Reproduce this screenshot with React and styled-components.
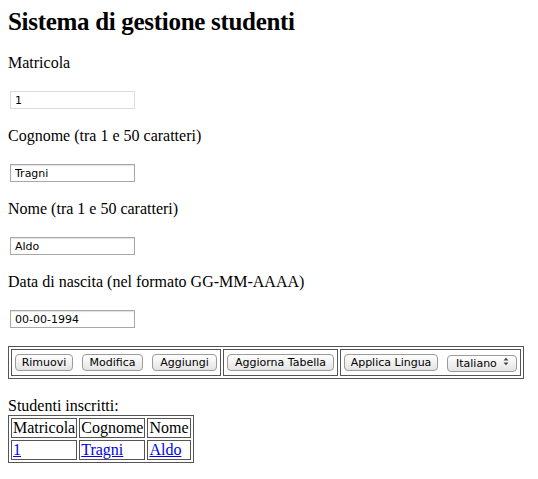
import React from "react";
import styled, { createGlobalStyle } from "styled-components";

const GlobalStyle = createGlobalStyle`
  body {
    margin: 0;
    padding: 7px 8px;
    background: #fff;
    color: #000;
    font-family: "Liberation Serif", "Times New Roman", serif;
    font-size: 16px;
  }
`;

const Title = styled.h1`
  margin: 0 0 18px;
  font-size: 25px;
  letter-spacing: -0.3px;
  line-height: 29px;
  font-weight: bold;
`;

const Group = styled.div`
  margin-bottom: 18px;
`;

const Label = styled.p`
  margin: 0;
  line-height: 18px;
`;

const Input = styled.input`
  display: block;
  box-sizing: border-box;
  width: 125px;
  height: 18px;
  margin: 19px 0 0 2px;
  padding: 0 4px;
  border: 1px solid ${(p) => (p.readOnly ? "#dcdcdc" : "#a8a8a8")};
  box-shadow: ${(p) => (p.readOnly ? "none" : "inset 0 1px 1px rgba(0,0,0,0.12)")};
  font-family: "DejaVu Sans", Verdana, sans-serif;
  font-size: 11px;
  color: #000;
  background: #fff;
  outline: none;
`;

const Toolbar = styled.table`
  margin-top: 1px;
  border: 1px solid #555;
  border-spacing: 2px;
`;

const ToolCell = styled.td`
  border: 1px solid #555;
  padding: 1px;
`;

const ButtonRow = styled.div`
  display: flex;
  gap: 5px;
  align-items: center;
`;

const Button = styled.button`
  box-sizing: border-box;
  width: ${(p) => p.w}px;
  height: 17px;
  margin: 2px;
  padding: 0;
  border: 1px solid #9b9b9b;
  border-radius: 4px;
  background: linear-gradient(#ffffff, #f1f1f1 50%, #e4e4e4);
  font-family: "DejaVu Sans", Verdana, sans-serif;
  font-size: 11px;
  line-height: 15px;
  color: #000;
  white-space: nowrap;
`;

const SelectWrap = styled.div`
  position: relative;
  margin: 2px;
`;

const Select = styled.select`
  box-sizing: border-box;
  width: 70px;
  height: 17px;
  padding: 0 0 0 8px;
  border: 1px solid #9b9b9b;
  border-radius: 4px;
  background: linear-gradient(#ffffff, #f1f1f1 50%, #e4e4e4);
  font-family: "DejaVu Sans", Verdana, sans-serif;
  font-size: 11px;
  color: #000;
  appearance: none;
  -webkit-appearance: none;
  outline: none;
`;

const Arrows = styled.svg`
  position: absolute;
  right: 8px;
  top: 4px;
  pointer-events: none;
`;

const Caption = styled.div`
  margin-top: 18px;
  line-height: 18px;
`;

const DataTable = styled.table`
  border: 1px solid #555;
  border-spacing: 2px;
`;

const Cell = styled.td`
  border: 1px solid #555;
  padding: 1px;
  line-height: 16px;
  white-space: nowrap;
`;

const Link = styled.a`
  color: #0000ee;
  text-decoration: underline;
`;

const fields = [
  { label: "Matricola", value: "1", readOnly: true },
  { label: "Cognome (tra 1 e 50 caratteri)", value: "Tragni" },
  { label: "Nome (tra 1 e 50 caratteri)", value: "Aldo" },
  { label: "Data di nascita (nel formato GG-MM-AAAA)", value: "00-00-1994" },
];

export default function App() {
  return (
    <>
      <GlobalStyle />
      <Title>Sistema di gestione studenti</Title>
      {fields.map((f) => (
        <Group key={f.label}>
          <Label>{f.label}</Label>
          <Input defaultValue={f.value} readOnly={f.readOnly} />
        </Group>
      ))}
      <Toolbar>
        <tbody>
          <tr>
            <ToolCell>
              <ButtonRow>
                <Button w={58}>Rimuovi</Button>
                <Button w={61}>Modifica</Button>
                <Button w={65}>Aggiungi</Button>
              </ButtonRow>
            </ToolCell>
            <ToolCell>
              <ButtonRow>
                <Button w={107}>Aggiorna Tabella</Button>
              </ButtonRow>
            </ToolCell>
            <ToolCell>
              <ButtonRow>
                <Button w={94}>Applica Lingua</Button>
                <SelectWrap>
                  <Select defaultValue="it">
                    <option value="it">Italiano</option>
                    <option value="en">English</option>
                  </Select>
                  <Arrows width="6" height="9" viewBox="0 0 6 9">
                    <path d="M0.5 3.5 L3 0.8 L5.5 3.5 Z M0.5 5.5 L3 8.2 L5.5 5.5 Z" fill="#444" />
                  </Arrows>
                </SelectWrap>
              </ButtonRow>
            </ToolCell>
          </tr>
        </tbody>
      </Toolbar>
      <Caption>Studenti inscritti:</Caption>
      <DataTable>
        <tbody>
          <tr>
            <Cell>Matricola</Cell>
            <Cell>Cognome</Cell>
            <Cell>Nome</Cell>
          </tr>
          <tr>
            <Cell><Link href="#">1</Link></Cell>
            <Cell><Link href="#">Tragni</Link></Cell>
            <Cell><Link href="#">Aldo</Link></Cell>
          </tr>
        </tbody>
      </DataTable>
    </>
  );
}
